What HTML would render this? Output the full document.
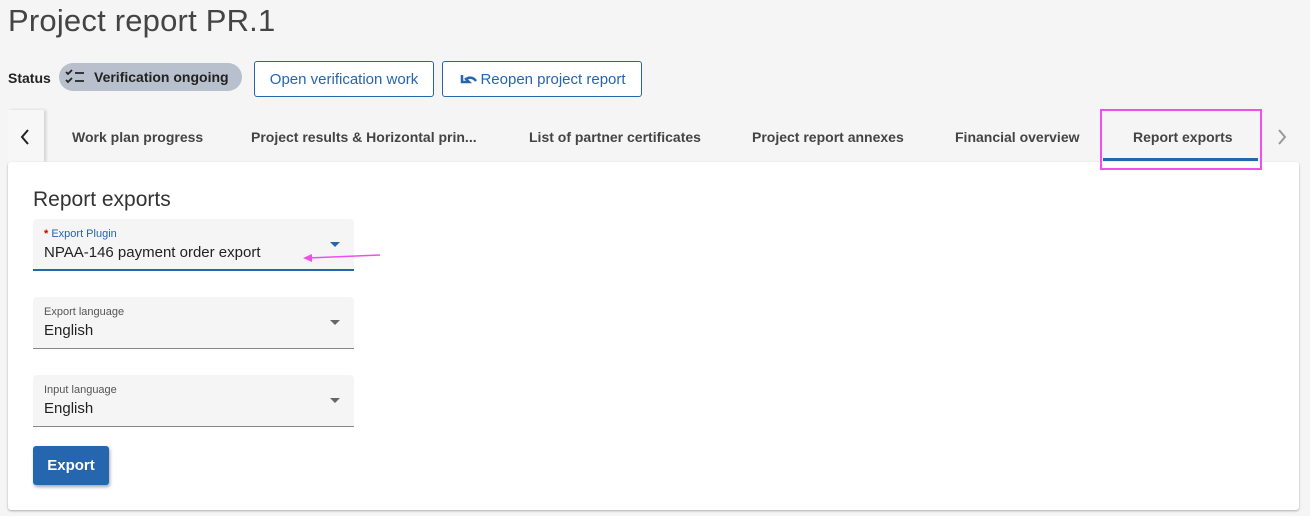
<!DOCTYPE html>
<html><head><style>
*{box-sizing:border-box;margin:0;padding:0}
body{width:1310px;height:516px;background:#f5f5f5;font-family:"Liberation Sans",sans-serif;color:#333;position:relative;overflow:hidden}
.a{position:absolute;white-space:nowrap}
h1{position:absolute;left:8px;top:3px;font-size:31px;font-weight:normal;color:#444;letter-spacing:0.2px}
.btn{position:absolute;height:36px;border:1px solid #2566ae;border-radius:3px;color:#2566ae;font-size:15px;display:flex;align-items:center;justify-content:center;background:#fff}
.tab{position:absolute;top:129px;font-size:14px;font-weight:bold;color:#444}
.card{position:absolute;left:8px;top:162px;width:1291px;height:348px;background:#fff;border-radius:3px;box-shadow:0 1px 2px rgba(0,0,0,.3)}
.field{position:absolute;left:33px;width:321px;height:52px;background:#f5f5f5;border-radius:4px 4px 0 0;border-bottom:1px solid #888}
.lbl{position:absolute;left:11px;top:9px;font-size:11px;color:#555}
.val{position:absolute;left:11px;top:25px;font-size:15px;color:#222}
.arr{position:absolute;right:14px;top:23px;width:0;height:0;border-left:5px solid transparent;border-right:5px solid transparent;border-top:5px solid #666}
</style></head><body>
<h1>Project report PR.1</h1>
<div class="a" style="left:8px;top:70px;font-size:14px;font-weight:bold;color:#222">Status</div>
<div class="a" style="left:59px;top:63px;width:183px;height:28px;border-radius:14px;background:#b7c0cc;font-size:14px;font-weight:bold;color:#222;padding:6px 0 0 35px">Verification ongoing</div>
<svg class="a" style="left:64px;top:68px" width="24" height="18" viewBox="0 0 24 18"><path d="M2 4l2 2 4-4M2 12l2 2 4-4M11 5h9M11 13h9" stroke="#222" stroke-width="1.8" fill="none"/></svg>
<div class="btn" style="left:254px;top:61px;width:180px">Open verification work</div>
<div class="btn" style="left:442px;top:61px;width:200px"><svg width="22" height="14" viewBox="0 0 22 14"><path d="M4 3v7h7l-3-3c3-2 7-2 10 2" stroke="#2566ae" stroke-width="2.5" fill="none"/></svg>Reopen project report</div>
<div class="a" style="left:8px;top:110px;width:36px;height:52px;background:#f7f7f7;box-shadow:2px 0 3px rgba(0,0,0,.15)"></div>
<svg class="a" style="left:19px;top:128px" width="12" height="18"><path d="M9 2L3 9l6 7" stroke="#222" stroke-width="2" fill="none"/></svg>
<div class="tab" style="left:72px">Work plan progress</div>
<div class="tab" style="left:251px">Project results &amp; Horizontal prin...</div>
<div class="tab" style="left:529px">List of partner certificates</div>
<div class="tab" style="left:752px">Project report annexes</div>
<div class="tab" style="left:955px">Financial overview</div>
<div class="tab" style="left:1133px">Report exports</div>
<svg class="a" style="left:1276px;top:128px" width="12" height="18"><path d="M3 2l6 7-6 7" stroke="#999" stroke-width="2" fill="none"/></svg>
<div class="card"></div>
<div class="a" style="left:1103px;top:158px;width:155px;height:3px;background:#2566ae"></div>
<div class="a" style="left:1100px;top:109px;width:162px;height:61px;border:2px solid #f04ef0"></div>
<div class="a" style="left:33px;top:188px;font-size:21px;color:#333">Report exports</div>
<div class="field" style="top:219px;border-bottom:2px solid #2566ae"><div class="lbl" style="color:#2566ae"><span style="color:#c00;font-weight:bold">*</span> Export Plugin</div><div class="val">NPAA-146 payment order export</div><div class="arr" style="border-top-color:#2566ae"></div></div>
<svg class="a" style="left:300px;top:250px" width="82" height="14"><path d="M80 5L8 8" stroke="#f04ef0" stroke-width="1.5"/><path d="M3 8l9-4v8z" fill="#f04ef0"/></svg>
<div class="field" style="top:297px"><div class="lbl">Export language</div><div class="val">English</div><div class="arr"></div></div>
<div class="field" style="top:375px"><div class="lbl">Input language</div><div class="val">English</div><div class="arr"></div></div>
<div class="a" style="left:33px;top:446px;width:76px;height:39px;background:#2566ae;border-radius:3px;box-shadow:1px 2px 3px rgba(0,0,0,.35);color:#fff;font-weight:bold;font-size:15px;text-align:center;line-height:40px">Export</div>
</body></html>
